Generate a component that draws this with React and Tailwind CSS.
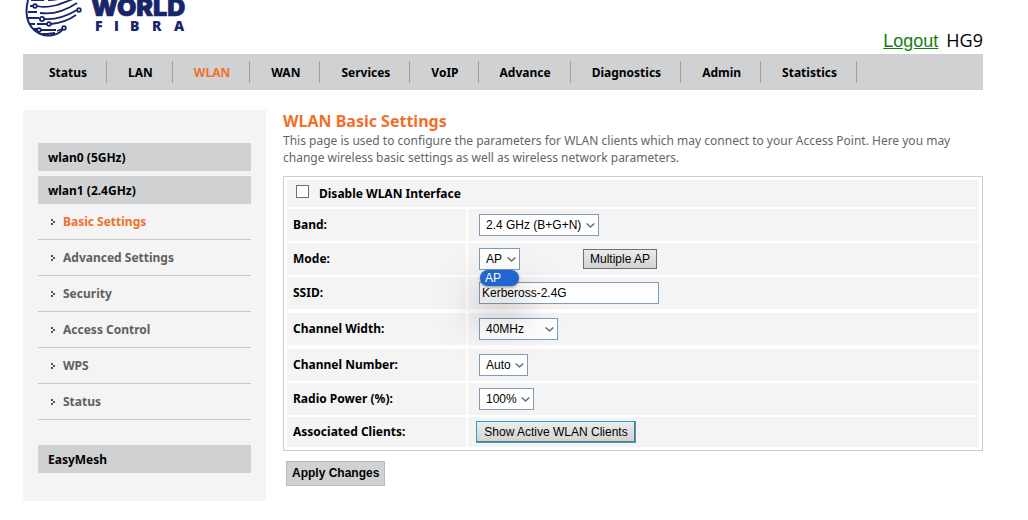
import React from "react";

const NAV = ["Status", "LAN", "WLAN", "WAN", "Services", "VoIP", "Advance", "Diagnostics", "Admin", "Statistics"];
const SUB = ["Basic Settings", "Advanced Settings", "Security", "Access Control", "WPS", "Status"];

function Logo() {
  return (
    <svg width="165" height="40" viewBox="0 0 165 40" role="img" aria-label="World Fibra" fill="none" stroke="#17256b" strokeWidth="1.8">
      <path d="M5 0C3 8 3 18 7 25C12 33 21 37 30 35C35 34 38 32 40 29" strokeWidth="2" />
      <path d="M8 0H21M25 0C30 0 34 0 38 -2M7 6H11M14 6C26 9 38 4 50 -1" />
      <path d="M5 12H14M17 13C31 15 42 11 54 3M5 18H16M21 19C34 20 44 16 54 10" />
      <path d="M6 24H12M14 24H24M28 24C38 23 46 20 53 15M10 29H14M18 30H33M19 34H24M24 34L32 33M34 31L39 29" />
      <circle cx="12" cy="6" r="1.8" fill="#fff" />
      <circle cx="19" cy="19" r="2.1" fill="#fff" />
      <circle cx="56" cy="10" r="1.8" fill="#fff" />
      <circle cx="26" cy="24" r="1.8" fill="#fff" />
      <circle cx="41" cy="28" r="1.8" fill="#fff" />
      <circle cx="16" cy="30" r="1.8" fill="#fff" />
      <g fill="#17256b" fontFamily="Inter, 'Open Sans', sans-serif" fontWeight="900">
        <text x="68" y="16" fontSize="25" strokeWidth="0.7">WORLD</text>
      </g>
      <g fill="#17256b" stroke="none" fontFamily="'Open Sans', sans-serif" fontWeight="800" fontSize="14">
        <text x="72" y="31">F</text>
        <text x="91" y="31">I</text>
        <text x="107" y="31">B</text>
        <text x="129" y="31">R</text>
        <text x="151" y="31">A</text>
      </g>
    </svg>
  );
}

function Arrow() {
  return (
    <svg width="5" height="6" viewBox="0 0 5 6" className="shrink-0" fill="#555" shapeRendering="crispEdges" aria-hidden="true">
      <path d="M0 0h2v2h-2zM2 2h2v2h-2zM0 4h2v2h-2z" />
    </svg>
  );
}

function Select({ id, options, width }) {
  return (
    <span className={"relative inline-flex " + width}>
      <select id={id} className="h-[22px] w-full appearance-none border border-[#7f9db9] bg-white pl-1.5 pr-3 font-['Liberation_Sans',sans-serif] text-xs font-normal text-black">
        {options.map((o) => <option key={o}>{o}</option>)}
      </select>
      <svg className="pointer-events-none absolute right-1 top-2" width="9" height="7" viewBox="0 0 9 7" fill="none" stroke="#707070" strokeWidth="1.6" aria-hidden="true">
        <path d="M0.7 1.5L4.5 5L8.3 1.5" />
      </svg>
    </span>
  );
}

function Row({ label, htmlFor, children, height = "h-8", pad = "pl-[11px]" }) {
  return (
    <div className={"flex gap-0.5 " + height}>
      <div className="flex w-[179px] shrink-0 items-center bg-[#f4f4f4] pl-1.5">
        {htmlFor ? <label htmlFor={htmlFor}>{label}</label> : <span>{label}</span>}
      </div>
      <div className={"flex grow items-center bg-[#f4f4f4] " + pad}>{children}</div>
    </div>
  );
}

const BTN = "border border-[#707070] bg-linear-to-b from-[#ececec] to-[#d2d2d2] font-['Liberation_Sans',sans-serif] text-xs font-normal text-black";
const SIDE = "flex h-7 items-center bg-[#d0d1d3] pl-2.5 pt-0.5 text-black";

export default function App() {
  return (
    <div className="bg-white pl-[23px] pr-[45px] font-['Noto_Sans',sans-serif] text-xs">
      <header className="flex h-[54px] items-start justify-between">
        <Logo />
        <div className="flex items-baseline gap-2 pt-[26px] text-lg text-black">
          <a href="#logout" className="font-['Liberation_Sans',sans-serif] text-[#128012] underline">Logout</a>
          <span className="font-['Open_Sans',sans-serif]">HG9</span>
        </div>
      </header>

      <nav className="flex h-9 items-center bg-[#d0d1d3] pl-[5px] font-bold text-black">
        {NAV.map((n) => (
          <a key={n} href={"#" + n} className={"flex h-[22px] items-center border-r border-[#a0a0a0] pl-[21px] pr-[19px] pt-0.5 " + (n === "WLAN" ? "text-[#f0702a]" : "")}>{n}</a>
        ))}
      </nav>

      <div className="mt-5 flex items-start gap-[17px]">
        <aside className="w-[243px] shrink-0 bg-[#f4f4f4] px-[15px] pb-7 pt-[33px] font-bold">
          <a href="#wlan0" className={SIDE}>wlan0 (5GHz)</a>
          <a href="#wlan1" className={SIDE + " mt-[5px]"}>wlan1 (2.4GHz)</a>
          <ul>
            {SUB.map((s, i) => (
              <li key={s} className="flex h-9 items-center border-b border-[#c8c8c8] pl-[13px]">
                <Arrow />
                <a href={"#" + s} className={"pl-[7px] " + (i === 0 ? "text-[#f0702a]" : "text-[#606060]")}>{s}</a>
              </li>
            ))}
          </ul>
          <a href="#easymesh" className={SIDE + " mt-[25px]"}>EasyMesh</a>
        </aside>

        <main className="min-w-0 grow">
          <h1 className="text-base leading-[22px] font-bold text-[#f0702a]">WLAN Basic Settings</h1>
          <p className="text-xs leading-[17px] text-[#666]">
            This page is used to configure the parameters for WLAN clients which may connect to your Access Point. Here you may change wireless basic settings as well as wireless network parameters.
          </p>

          <form onSubmit={(e) => e.preventDefault()} className="mt-2.5">
            <div className="flex flex-col gap-1 border border-[#ccc] p-[3px] font-bold text-black">
              <div className="flex flex-col gap-0.5">
                <div className="flex h-[27px] items-center gap-2.5 bg-[#f4f4f4] pl-[9px]">
                  <input id="disable" type="checkbox" className="mb-1 size-[13px] appearance-none border border-[#707070] bg-white" />
                  <label htmlFor="disable">Disable WLAN Interface</label>
                </div>
                <Row label="Band:" htmlFor="band"><Select id="band" options={["2.4 GHz (B+G+N)"]} width="w-[120px]" /></Row>
                <Row label="Mode:" htmlFor="mode">
                  <div className="relative flex">
                    <Select id="mode" options={["AP"]} width="w-[41px]" />
                    <div className="absolute left-px top-[22px] z-10 h-4 w-[39px] rounded-lg bg-[#1e66d0] pl-[5px] font-['Liberation_Sans',sans-serif] text-xs font-normal leading-4 text-white shadow-[0_26px_44px_4px_rgba(0,0,0,0.35),0_1px_3px_rgba(0,0,0,0.4)]">AP</div>
                  </div>
                  <button type="button" className={BTN + " ml-[63px] h-5 w-[74px]"}>Multiple AP</button>
                </Row>
                <Row label="SSID:" htmlFor="ssid">
                  <input id="ssid" defaultValue="Kerbeross-2.4G" className="h-[22px] w-[180px] border border-[#7f9db9] bg-white pl-0.5 font-['Liberation_Sans',sans-serif] text-xs font-normal" />
                </Row>
              </div>
              <Row label="Channel Width:" htmlFor="cw"><Select id="cw" options={["40MHz"]} width="w-[79px]" /></Row>
              <div className="flex flex-col gap-0.5">
                <Row label="Channel Number:" htmlFor="cn"><Select id="cn" options={["Auto"]} width="w-[49px]" /></Row>
                <Row label="Radio Power (%):" htmlFor="rp"><Select id="rp" options={["100%"]} width="w-[55px]" /></Row>
                <Row label="Associated Clients:" height="h-[30px]" pad="pl-2">
                  <button type="button" className={BTN + " h-[22px] w-40 shadow-[inset_-1px_-1px_#707070] outline-1 -outline-offset-1 outline-[#2a9fd8]"}>Show Active WLAN Clients</button>
                </Row>
              </div>
            </div>
            <button type="submit" className="ml-[3px] mt-2.5 h-[25px] border border-[#bbb] bg-[#d0d1d3] px-[5px] pb-0.5 font-['Liberation_Sans',sans-serif] text-xs font-bold text-black">Apply Changes</button>
          </form>
        </main>
      </div>
    </div>
  );
}
